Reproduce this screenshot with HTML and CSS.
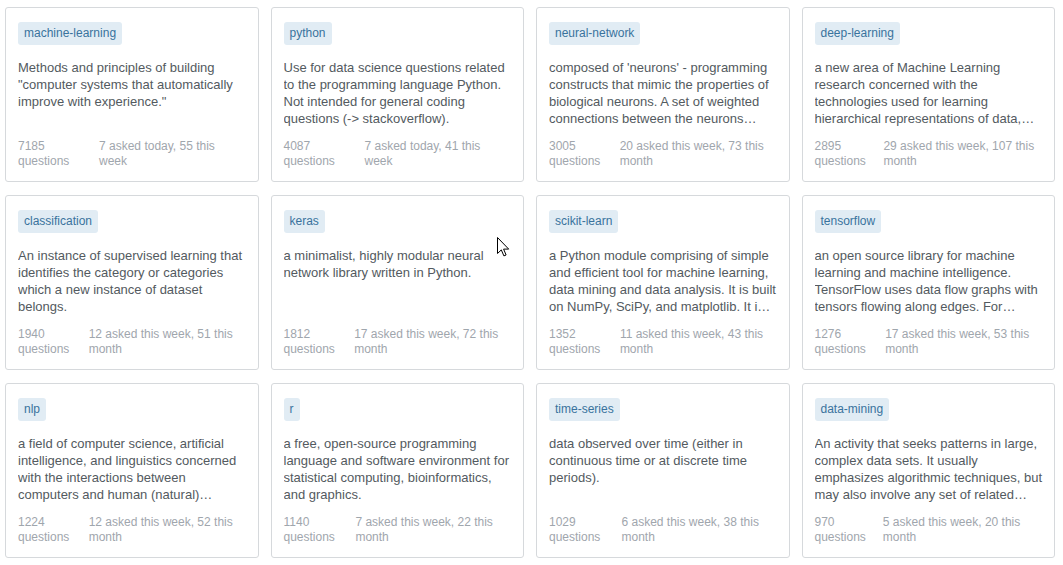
FILE: index.html
```html
<!DOCTYPE html>
<html lang="en">
<head>
<meta charset="utf-8">
<title>Tags</title>
<link rel="stylesheet" href="styles.css">
</head>
<body>
<div class="tag-grid">
  <div class="card">
    <div class="card-head"><a class="tag">machine-learning</a></div>
    <p class="excerpt">Methods and principles of building "computer systems that automatically improve with experience."</p>
    <div class="stats"><div class="stat">7185 questions</div><div class="stat">7 asked today, 55 this week</div></div>
  </div>
  <div class="card">
    <div class="card-head"><a class="tag">python</a></div>
    <p class="excerpt">Use for data science questions related to the programming language Python. Not intended for general coding questions (-&gt; stackoverflow).</p>
    <div class="stats"><div class="stat">4087 questions</div><div class="stat">7 asked today, 41 this week</div></div>
  </div>
  <div class="card">
    <div class="card-head"><a class="tag">neural-network</a></div>
    <p class="excerpt">composed of 'neurons' - programming constructs that mimic the properties of biological neurons. A set of weighted connections between the neurons…</p>
    <div class="stats"><div class="stat">3005 questions</div><div class="stat">20 asked this week, 73 this month</div></div>
  </div>
  <div class="card">
    <div class="card-head"><a class="tag">deep-learning</a></div>
    <p class="excerpt">a new area of Machine Learning research concerned with the technologies used for learning hierarchical representations of data,…</p>
    <div class="stats"><div class="stat">2895 questions</div><div class="stat">29 asked this week, 107 this month</div></div>
  </div>

  <div class="card">
    <div class="card-head"><a class="tag">classification</a></div>
    <p class="excerpt">An instance of supervised learning that identifies the category or categories which a new instance of dataset belongs.</p>
    <div class="stats"><div class="stat">1940 questions</div><div class="stat">12 asked this week, 51 this month</div></div>
  </div>
  <div class="card">
    <div class="card-head"><a class="tag">keras</a></div>
    <p class="excerpt">a minimalist, highly modular neural network library written in Python.</p>
    <div class="stats"><div class="stat">1812 questions</div><div class="stat">17 asked this week, 72 this month</div></div>
  </div>
  <div class="card">
    <div class="card-head"><a class="tag">scikit-learn</a></div>
    <p class="excerpt">a Python module comprising of simple and efficient tool for machine learning, data mining and data analysis. It is built on NumPy, SciPy, and matplotlib. It i…</p>
    <div class="stats"><div class="stat">1352 questions</div><div class="stat">11 asked this week, 43 this month</div></div>
  </div>
  <div class="card">
    <div class="card-head"><a class="tag">tensorflow</a></div>
    <p class="excerpt">an open source library for machine learning and machine intelligence. TensorFlow uses data flow graphs with tensors flowing along edges. For…</p>
    <div class="stats"><div class="stat">1276 questions</div><div class="stat">17 asked this week, 53 this month</div></div>
  </div>

  <div class="card">
    <div class="card-head"><a class="tag">nlp</a></div>
    <p class="excerpt">a field of computer science, artificial intelligence, and linguistics concerned with the interactions between computers and human (natural)…</p>
    <div class="stats"><div class="stat">1224 questions</div><div class="stat">12 asked this week, 52 this month</div></div>
  </div>
  <div class="card">
    <div class="card-head"><a class="tag">r</a></div>
    <p class="excerpt">a free, open-source programming language and software environment for statistical computing, bioinformatics, and graphics.</p>
    <div class="stats"><div class="stat">1140 questions</div><div class="stat">7 asked this week, 22 this month</div></div>
  </div>
  <div class="card">
    <div class="card-head"><a class="tag">time-series</a></div>
    <p class="excerpt">data observed over time (either in continuous time or at discrete time periods).</p>
    <div class="stats"><div class="stat">1029 questions</div><div class="stat">6 asked this week, 38 this month</div></div>
  </div>
  <div class="card">
    <div class="card-head"><a class="tag">data-mining</a></div>
    <p class="excerpt">An activity that seeks patterns in large, complex data sets. It usually emphasizes algorithmic techniques, but may also involve any set of related…</p>
    <div class="stats"><div class="stat">970 questions</div><div class="stat">5 asked this week, 20 this month</div></div>
  </div>
</div>
<svg class="cursor" width="13" height="21" viewBox="0 0 13 21" aria-hidden="true">
  <path d="M0.5 0.5 L0.5 16.5 L4.3 12.9 L6.9 18.9 L9.1 18 L6.6 12.1 L11.7 12.1 Z" fill="#fff" stroke="#000" stroke-width="1" stroke-linejoin="miter"/>
</svg>
</body>
</html>
```

FILE: styles.css
```css
html, body {
  margin: 0;
  padding: 0;
  background: #fff;
}

body {
  font-family: "Liberation Sans", Arial, sans-serif;
  position: relative;
  min-height: 565px;
}

.tag-grid {
  display: grid;
  grid-template-columns: repeat(4, 1fr);
  column-gap: 12px;
  row-gap: 13px;
  padding: 7px 8px 0 5px;
}

.card {
  border: 1px solid #d6d9dc;
  border-radius: 3px;
  padding: 14px 12px 12px;
  display: flex;
  flex-direction: column;
}

.card-head {
  display: flex;
}

.tag {
  display: inline-block;
  font-size: 12px;
  line-height: 15px;
  padding: 4px 6px;
  color: #39739d;
  background: #e1ecf4;
  border-radius: 3px;
  text-decoration: none;
  white-space: nowrap;
}

.excerpt {
  margin: 14px -3px 0 0;
  font-size: 13px;
  line-height: 17px;
  color: #535a60;
  height: 68px;
  overflow: hidden;
  display: -webkit-box;
  -webkit-line-clamp: 4;
  -webkit-box-orient: vertical;
}

.stats {
  margin-top: auto;
  display: flex;
  justify-content: space-between;
  font-size: 12px;
  line-height: 15px;
  color: #9fa6ad;
  padding-top: 12px;
}

.stat {
  flex: 0 1 auto;
}

.cursor {
  position: absolute;
  left: 497px;
  top: 237px;
}
```
